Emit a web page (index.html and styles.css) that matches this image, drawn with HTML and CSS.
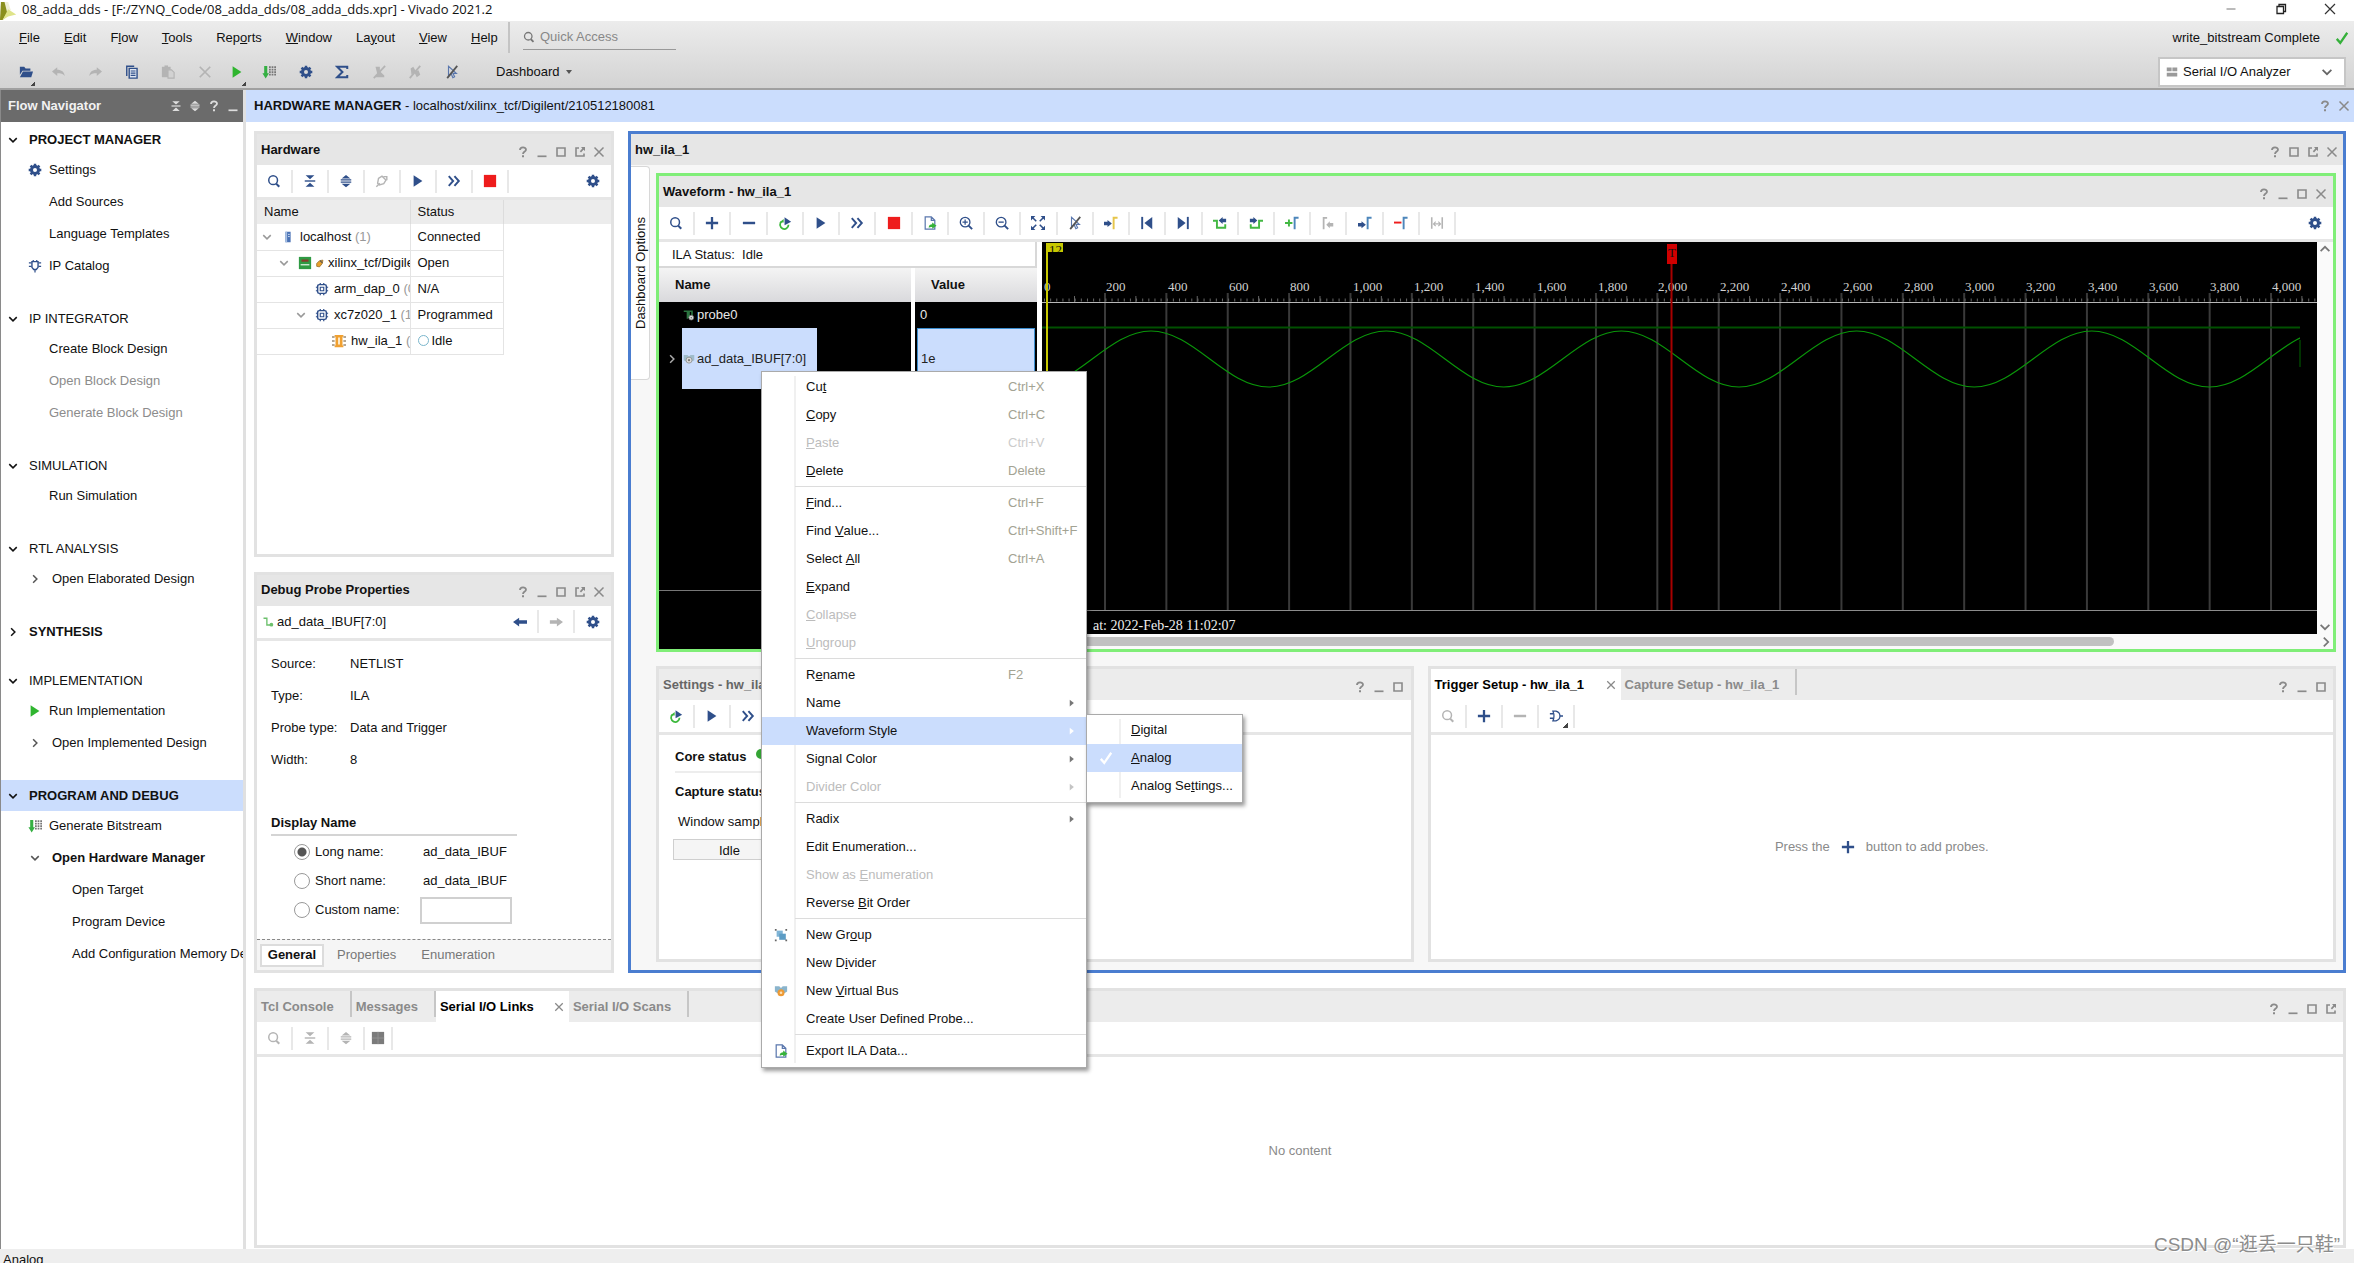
FILE: index.html
```html
<!DOCTYPE html>
<html lang="en">
<head>
<meta charset="utf-8">
<title>08_adda_dds - Vivado 2021.2</title>
<link rel="stylesheet" href="styles.css">
</head>
<body>
<svg class="sprite" aria-hidden="true">
  <symbol id="i-search" viewBox="0 0 16 16"><circle cx="7" cy="7" r="5" fill="none" stroke="currentColor" stroke-width="1.7"/><path d="M10.5 11l3.5 3.5" stroke="currentColor" stroke-width="2.4"/></symbol>
  <symbol id="i-collapse" viewBox="0 0 16 16"><path d="M3 1.500h10L8 6zM3 14.500h10L8 10z" fill="currentColor"/><path d="M2 8h12" stroke="currentColor" stroke-width="1.600"/></symbol>
  <symbol id="i-expand" viewBox="0 0 16 16"><path d="M3 5h10L8 1zM3 11h10l-5 4z" fill="currentColor"/><path d="M2 6.800h12M2 9.300h12" stroke="currentColor" stroke-width="1.400"/></symbol>
  <symbol id="i-gear" viewBox="0 0 16 16"><circle cx="8" cy="8" r="4" fill="none" stroke="currentColor" stroke-width="3.400"/><path d="M8 .8v3M8 12.200v3M.8 8h3M12.200 8h3M2.900 2.900l2 2M11.100 11.100l2 2M2.900 13.100l2-2M11.100 4.900l2-2" stroke="currentColor" stroke-width="2.800"/></symbol>
  <symbol id="i-play" viewBox="0 0 16 16"><path d="M3 1.500L13 8 3 14.500z" fill="currentColor"/></symbol>
  <symbol id="i-ffwd" viewBox="0 0 16 16"><path d="M2 2.500L7 8l-5 5.500M8.500 2.500l5 5.500-5 5.500" fill="none" stroke="currentColor" stroke-width="2.200"/></symbol>
  <symbol id="i-stop" viewBox="0 0 16 16"><path d="M1 1h14v14H1z" fill="#ee1c1c"/></symbol>
  <symbol id="i-plus" viewBox="0 0 16 16"><path d="M8 1v14M1 8h14" stroke="currentColor" stroke-width="2.600"/></symbol>
  <symbol id="i-minus" viewBox="0 0 16 16"><path d="M1 8h14" stroke="currentColor" stroke-width="2.800"/></symbol>
  <symbol id="i-rerun" viewBox="0 0 16 16"><path d="M4 6.500a4.800 4.800 0 1 0 8 3.500" fill="none" stroke="#3cb83c" stroke-width="2"/><path d="M1.500 7.500h5V3.500z" fill="#3cb83c"/><path d="M7.500 1.500L15 6.500l-7.500 4z" fill="currentColor"/></symbol>
  <symbol id="i-export" viewBox="0 0 16 16"><path d="M9.500 1H2.500v14h11V5zM9.500 1v4h4" fill="#fff" stroke="#5a77ad" stroke-width="1.400"/><path d="M6.500 13.500c0-3 2-4 4-4V7.500l5 3.500-5 3.500v-2c-2 0-3 .2-4 1z" fill="#37b23a"/></symbol>
  <symbol id="i-zoomin" viewBox="0 0 16 16"><circle cx="7" cy="7" r="5.500" fill="none" stroke="currentColor" stroke-width="1.500"/><path d="M11 11l4 4" stroke="currentColor" stroke-width="2.200"/><path d="M4 7h6M7 4v6" stroke="currentColor" stroke-width="1.400"/></symbol>
  <symbol id="i-zoomout" viewBox="0 0 16 16"><circle cx="7" cy="7" r="5.500" fill="none" stroke="currentColor" stroke-width="1.500"/><path d="M11 11l4 4" stroke="currentColor" stroke-width="2.200"/><path d="M4 7h6" stroke="currentColor" stroke-width="1.500"/></symbol>
  <symbol id="i-fit" viewBox="0 0 16 16"><path d="M0 0h5L0 5zM16 0v5l-5-5zM0 16v-5l5 5zM16 16h-5l5-5z" fill="currentColor"/><path d="M2 2l4 4M14 2l-4 4M2 14l4-4M14 14l-4-4" stroke="currentColor" stroke-width="1.800"/></symbol>
  <symbol id="i-cursoroff" viewBox="0 0 16 16"><path d="M4 1.500v11l3-2.500 2 4.500 2-1-2-4h4z" fill="none" stroke="#5a77ad" stroke-width="1.300"/><path d="M14 1L2.500 15" stroke="#555" stroke-width="2"/></symbol>
  <symbol id="i-gocursor" viewBox="0 0 16 16"><path d="M0 6.500h4v-2L9 8.500l-5 4v-2H0z" fill="currentColor"/><path d="M15.500 2H11v13" fill="none" stroke="#e6c54a" stroke-width="2.200"/></symbol>
  <symbol id="i-first" viewBox="0 0 16 16"><path d="M2.500 1v14" stroke="currentColor" stroke-width="2.200"/><path d="M14 1v14L5 8z" fill="currentColor"/></symbol>
  <symbol id="i-last" viewBox="0 0 16 16"><path d="M13.500 1v14" stroke="currentColor" stroke-width="2.200"/><path d="M2 1v14l9-7z" fill="currentColor"/></symbol>
  <symbol id="i-prevedge" viewBox="0 0 16 16"><path d="M0 5.500h4.500v8H15M14 13V9.500" fill="none" stroke="#43b843" stroke-width="2.200"/><path d="M6.500 5L11 1v2h4v4h-4v2z" fill="currentColor"/></symbol>
  <symbol id="i-nextedge" viewBox="0 0 16 16"><path d="M1 13.500h10.500v-8H16M2 13V9.500" fill="none" stroke="#43b843" stroke-width="2.200"/><path d="M9.500 5L5 1v2H1v4h4v2z" fill="currentColor"/></symbol>
  <symbol id="i-addmark" viewBox="0 0 16 16"><path d="M4.500 4v8M0 8h8.500" stroke="#43b843" stroke-width="2.200"/><path d="M15.500 2H11v13" fill="none" stroke="#4d86bb" stroke-width="2.200"/></symbol>
  <symbol id="i-prevmark" viewBox="0 0 16 16"><path d="M7 2H3v13" fill="none" stroke="currentColor" stroke-width="2"/><path d="M6 10l4-4v2h4v4h-4v2z" fill="currentColor"/></symbol>
  <symbol id="i-nextmark" viewBox="0 0 16 16"><path d="M0 8h4V6l5 4-5 4v-2H0z" fill="currentColor"/><path d="M15.500 2H11v13" fill="none" stroke="#4d86bb" stroke-width="2.200"/></symbol>
  <symbol id="i-delmark" viewBox="0 0 16 16"><path d="M0 7.500h8.500" stroke="#ee1c1c" stroke-width="2.200"/><path d="M15.500 2H11v13" fill="none" stroke="#4d86bb" stroke-width="2.200"/></symbol>
  <symbol id="i-swap" viewBox="0 0 16 16"><path d="M2 1.500v13M14 1.500v13" stroke="currentColor" stroke-width="1.800"/><path d="M4 9h8M6.500 6.500L4 9l2.500 2.500M9.500 6.500L12 9l-2.500 2.500" fill="none" stroke="currentColor" stroke-width="1.300"/></symbol>
  <symbol id="i-plug" viewBox="0 0 16 16"><path d="M4 5l4-2.500 4.500 4.500-2.500 4-5 1.500-2-2z" fill="none" stroke="currentColor" stroke-width="1.600"/><path d="M9.500 3h4v4M1.500 14.500l4-4" fill="none" stroke="currentColor" stroke-width="1.600"/></symbol>
  <symbol id="i-open" viewBox="0 0 16 16"><path d="M1 2h5l1.500 2H13v2.500H4L1 11z" fill="currentColor"/><path d="M4.500 7.500H16L14 14H1z" fill="currentColor"/></symbol>
  <symbol id="i-undo" viewBox="0 0 16 16"><path d="M6 2.500v3c5 0 8 2.500 8.500 7-2-2.500-4.500-3-8.500-3v3L0 7.500z" fill="currentColor"/></symbol>
  <symbol id="i-redo" viewBox="0 0 16 16"><path d="M10 2.500v3c-5 0-8 2.500-8.500 7 2-2.500 4.500-3 8.500-3v3l6-5z" fill="currentColor"/></symbol>
  <symbol id="i-copy" viewBox="0 0 16 16"><path d="M2 12.500V1.500h8.500" fill="none" stroke="currentColor" stroke-width="1.600"/><path d="M4.800 3.800h9v11.200h-9z" fill="#dfe6f2" stroke="currentColor" stroke-width="1.600"/><path d="M6.500 6.800h5.500M6.500 9.300h5.500M6.500 11.800h5.500" stroke="currentColor" stroke-width="1.300"/></symbol>
  <symbol id="i-paste" viewBox="0 0 16 16"><path d="M1 2h10v12H1z" fill="currentColor"/><path d="M4 .5h4v2.500H4z" fill="currentColor"/><path d="M8 5.500h4l3 3V15H8z" fill="#d2d2d2" stroke="currentColor" stroke-width="1.300"/></symbol>
  <symbol id="i-cross" viewBox="0 0 16 16"><path d="M2 2l12 12M14 2L2 14" stroke="currentColor" stroke-width="2"/></symbol>
  <symbol id="i-bits" viewBox="0 0 16 16"><path d="M2.500 1h3.500v8.500h2L4.200 15.500.5 9.500h2z" fill="#35b043"/><path d="M9 1.500v11M12 1.500v11M15 1.500v11" stroke="#777" stroke-width="2" stroke-dasharray="2 .8"/></symbol>
  <symbol id="i-sigma" viewBox="0 0 16 16"><path d="M14 4.500V2H2.500L8.500 8l-6 6H14v-2.500" fill="none" stroke="currentColor" stroke-width="2.300"/></symbol>
  <symbol id="i-slash" viewBox="0 0 16 16"><path d="M3 4l3-2 3 5-5 4zM7 8l5-2 2 5-4 3z" fill="currentColor"/><path d="M14 1L2 15" stroke="currentColor" stroke-width="2"/></symbol>
  <symbol id="i-unmark" viewBox="0 0 16 16"><path d="M4 2h5v5l5 5v2H3l3-4z" fill="currentColor"/><path d="M15 1L2 15" stroke="currentColor" stroke-width="2"/></symbol>
  <symbol id="i-arrowl" viewBox="0 0 16 16"><path d="M0 8l7-5v3h9v4H7v3z" fill="currentColor"/></symbol>
  <symbol id="i-arrowr" viewBox="0 0 16 16"><path d="M16 8L9 3v3H1v4h8v3z" fill="currentColor"/></symbol>
  <symbol id="i-gate" viewBox="0 0 16 16"><path d="M4.500 2.500H8c3.500 1 4.500 3.500 4.500 5.500S11.500 12.500 8 13.500H4.500c1.500-3.500 1.500-7.500 0-11z" fill="none" stroke="currentColor" stroke-width="1.400"/><path d="M1 5.500h4M1 10.500h4M12.500 8H16" stroke="currentColor" stroke-width="1.600"/></symbol>
  <symbol id="i-square" viewBox="0 0 16 16"><path d="M1 1h14v14H1z" fill="#7b7b7b"/><path d="M8 1v14M1 8h14" stroke="#949494"/></symbol>
  <symbol id="i-down" viewBox="0 0 16 16"><path d="M3 5.500l5 5 5-5" fill="none" stroke="currentColor" stroke-width="2"/></symbol>
  <symbol id="i-right" viewBox="0 0 16 16"><path d="M5.500 3l5 5-5 5" fill="none" stroke="currentColor" stroke-width="2"/></symbol>
  <symbol id="i-up" viewBox="0 0 16 16"><path d="M3 10.500l5-5 5 5" fill="none" stroke="currentColor" stroke-width="2"/></symbol>
  <symbol id="i-help" viewBox="0 0 12 12"><path d="M3 4c0-3.500 6-3.500 6-.3C9 5.500 6 5.500 6 8" fill="none" stroke="currentColor" stroke-width="1.800"/><path d="M6 9.300v2" stroke="currentColor" stroke-width="2"/></symbol>
  <symbol id="i-min" viewBox="0 0 12 12"><path d="M1.500 10.300h9" stroke="currentColor" stroke-width="1.700"/></symbol>
  <symbol id="i-max" viewBox="0 0 12 12"><path d="M2 2h8v8H2z" fill="none" stroke="currentColor" stroke-width="1.600"/></symbol>
  <symbol id="i-float" viewBox="0 0 12 12"><path d="M5 2H2v8h8V7.500" fill="none" stroke="currentColor" stroke-width="1.600"/><path d="M7 1h4v4L9.500 3.800 7 6.500 5.800 5.200 8.300 2.500z" fill="currentColor"/></symbol>
  <symbol id="i-close" viewBox="0 0 12 12"><path d="M1.500 1.500l9 9M10.500 1.500l-9 9" stroke="currentColor" stroke-width="1.500"/></symbol>
  <symbol id="i-chip" viewBox="0 0 16 16"><rect x="3" y="3" width="10" height="10" rx="2" fill="none" stroke="currentColor" stroke-width="1.700"/><path d="M6 6h4v4H6z" fill="none" stroke="currentColor" stroke-width="1.300"/><path d="M6 1v2M10 1v2M6 13v2M10 13v2M1 6h2M1 10h2M13 6h2M13 10h2" stroke="currentColor" stroke-width="1.400"/></symbol>
  <symbol id="i-ip" viewBox="0 0 16 16"><path d="M4.500 3h7v6.500l-2 2.500h-3l-2-2.500z" fill="none" stroke="currentColor" stroke-width="1.600"/><path d="M1 4.500h3M1 8.500h3M12 4.500h3M12 8.500h3M8 12v3.500M6 1v2M10 1v2" stroke="currentColor" stroke-width="1.400"/></symbol>
  <symbol id="i-host" viewBox="0 0 16 16"><path d="M5 2h6v12H5z" fill="#4a72b5"/><path d="M5 2h2v12H5z" fill="#a9c0e2"/><path d="M8 5h2M8 7.500h2" stroke="#dce7f7"/></symbol>
  <symbol id="i-board" viewBox="0 0 16 16"><path d="M1 1h14v14H1z" fill="#2f9a43"/><path d="M4 4h8v2.500H4z" fill="#8a3a2c"/><path d="M3 10h10" stroke="#d8efdb" stroke-width="1.500"/></symbol>
  <symbol id="i-conn" viewBox="0 0 16 16"><path d="M3 8l5-5 6-1-1 6-5 6-5-1z" fill="#e9a02b" stroke="#9a7435" stroke-width="1.500"/><path d="M9 3l4 4" stroke="#555" stroke-width="2"/></symbol>
  <symbol id="i-ila" viewBox="0 0 16 16"><path d="M3 1h10v2H3zM3 13h10v2H3zM4 3h8v10H4z" fill="#f0a030"/><path d="M0 3.500h3M13 3.500h3M0 8h3M13 8h3M0 12.500h3M13 12.500h3" stroke="#9b8b72" stroke-width="1.600"/><path d="M7 4h2v8H7z" fill="#fff3dc"/></symbol>
  <symbol id="i-net" viewBox="0 0 16 16"><path d="M2 3h4.500v9H14" fill="none" stroke="#6cc06c" stroke-width="1.800"/><circle cx="12.500" cy="11.500" r="2.500" fill="#6cc06c"/></symbol>
  <symbol id="i-probe" viewBox="0 0 16 16"><path d="M1 3h5v10M8 12V3h4v6" fill="none" stroke="#2b7440" stroke-width="2.200"/><circle cx="11" cy="11.500" r="3.200" fill="#ddd" stroke="#777"/><circle cx="11" cy="11.500" r="1" fill="#666"/></symbol>
  <symbol id="i-bus" viewBox="0 0 16 16"><path d="M1 2.500h5l2 2 2-2h5v7l-4 2.500H5L1 9.500z" fill="#9fbccb"/><circle cx="8" cy="9.500" r="4" fill="#ddd" stroke="#888"/><circle cx="8" cy="9.500" r="1.500" fill="#777"/></symbol>
  <symbol id="i-vbus" viewBox="0 0 16 16"><path d="M1 2.500h5l2 2 2-2h5v6l-4 2.500H5L1 8.500z" fill="#8ab4cc"/><circle cx="8" cy="10" r="4" fill="#ee9a34"/><circle cx="8" cy="10" r="1.500" fill="#fbe0b8"/></symbol>
  <symbol id="i-group" viewBox="0 0 16 16"><path d="M3 3h7v7H3z" fill="#7fb4d6"/><path d="M6 6.500h7.500v7H6z" fill="#5c9cc4"/><path d="M1 1h2v2H1zM13 1h2v2h-2zM1 13h2v2H1zM13 13h2v2h-2z" fill="#666"/></symbol>
  <symbol id="i-layout" viewBox="0 0 16 16"><path d="M1 2h6.500v5H1zM8.500 2H15v5H8.500zM1 9h14v5H1z" fill="#9a9a9a"/></symbol>
  <symbol id="i-check" viewBox="0 0 16 16"><path d="M2 9l4 4.500L14 2" fill="none" stroke="currentColor" stroke-width="2.600"/></symbol>
  <symbol id="i-sub" viewBox="0 0 16 16"><path d="M5 3.500l5.500 4.500L5 12.500z" fill="currentColor"/></symbol>
  <symbol id="i-logo" viewBox="0 0 20 20"><path d="M1 0h5l3 10-6 10H0z" fill="#8a8f1d"/><path d="M5 0h4l3 9-4 3z" fill="#f0f0d8"/><path d="M9 8l9 6-9 2-6 4z" fill="#dfe48a"/></symbol>
</svg>

<header class="titlebar">
  <svg class="logo"><use href="#i-logo"/></svg>
  <h1>08_adda_dds - [F:/ZYNQ_Code/08_adda_dds/08_adda_dds.xpr] - Vivado 2021.2</h1>
  <div class="win-ctl">
    <button aria-label="Minimize"><svg viewBox="0 0 12 12"><path d="M1.500 6h9" stroke="#777"/></svg></button>
    <button aria-label="Restore"><svg viewBox="0 0 12 12"><path d="M2 3.500h6.500v7H2zM4 3.500v-2h6.500v7h-2" fill="none" stroke="#222" stroke-width="1.300"/></svg></button>
    <button aria-label="Close"><svg viewBox="0 0 12 12"><path d="M1 1l10 10M11 1L1 11" stroke="#333" stroke-width="1.200"/></svg></button>
  </div>
</header>

<div class="ribbon">
  <div class="menurow">
    <nav class="menubar">
      <button><u>F</u>ile</button><button><u>E</u>dit</button><button>F<u>l</u>ow</button><button><u>T</u>ools</button><button>Rep<u>o</u>rts</button><button><u>W</u>indow</button><button>La<u>y</u>out</button><button><u>V</u>iew</button><button><u>H</u>elp</button>
    </nav>
    <label class="quick"><svg class="ic-s"><use href="#i-search"/></svg><input type="text" placeholder="Quick Access" aria-label="Quick Access"></label>
    <span class="build">write_bitstream Complete<svg class="ic ok"><use href="#i-check"/></svg></span>
  </div>
  <div class="toolrow">
    <div class="maintools">
      <button class="nar drop" aria-label="Open"><svg class="ic"><use href="#i-open"/></svg></button>
      <button class="off" aria-label="Undo"><svg class="ic"><use href="#i-undo"/></svg></button>
      <button class="off" aria-label="Redo"><svg class="ic"><use href="#i-redo"/></svg></button>
      <button aria-label="Copy"><svg class="ic"><use href="#i-copy"/></svg></button>
      <button class="off" aria-label="Paste"><svg class="ic"><use href="#i-paste"/></svg></button>
      <button class="off" aria-label="Delete"><svg class="ic"><use href="#i-cross"/></svg></button>
      <button class="nar drop green" aria-label="Run"><svg class="ic"><use href="#i-play"/></svg></button>
      <button aria-label="Generate Bitstream"><svg class="ic"><use href="#i-bits"/></svg></button>
      <button aria-label="Settings"><svg class="ic"><use href="#i-gear"/></svg></button>
      <button aria-label="Report"><svg class="ic"><use href="#i-sigma"/></svg></button>
      <button class="off" aria-label="Unmark"><svg class="ic"><use href="#i-unmark"/></svg></button>
      <button class="off" aria-label="Unhighlight"><svg class="ic"><use href="#i-slash"/></svg></button>
      <button aria-label="Unselect"><svg class="ic"><use href="#i-cursoroff"/></svg></button>
    </div>
    <button class="dash">Dashboard<i class="caret"></i></button>
    <label class="layout-sel"><svg class="ic-s"><use href="#i-layout"/></svg><select aria-label="Layout"><option>Serial I/O Analyzer</option></select><svg class="ic"><use href="#i-down"/></svg></label>
  </div>
</div>

<div class="workspace">
  <aside class="flow">
    <div class="flow-head"><h2>Flow Navigator</h2>
      <div class="ctl"><button aria-label="Collapse all"><svg><use href="#i-collapse"/></svg></button><button aria-label="Expand all"><svg><use href="#i-expand"/></svg></button><button aria-label="Help"><svg><use href="#i-help"/></svg></button><button aria-label="Minimize"><svg><use href="#i-min"/></svg></button></div>
    </div>
    <nav class="tree">
      <section><h3 class="b"><svg class="ic-s"><use href="#i-down"/></svg>PROJECT MANAGER</h3>
        <ul><li><a href="#"><svg class="ic navy"><use href="#i-gear"/></svg>Settings</a></li><li><a href="#">Add Sources</a></li><li><a href="#">Language Templates</a></li><li><a href="#"><svg class="ic navy"><use href="#i-ip"/></svg>IP Catalog</a></li></ul></section>
      <section><h3><svg class="ic-s"><use href="#i-down"/></svg>IP INTEGRATOR</h3>
        <ul><li><a href="#">Create Block Design</a></li><li><a href="#" class="dim">Open Block Design</a></li><li><a href="#" class="dim">Generate Block Design</a></li></ul></section>
      <section><h3><svg class="ic-s"><use href="#i-down"/></svg>SIMULATION</h3>
        <ul><li><a href="#">Run Simulation</a></li></ul></section>
      <section><h3><svg class="ic-s"><use href="#i-down"/></svg>RTL ANALYSIS</h3>
        <ul><li><a href="#" class="sub"><svg class="ic-s"><use href="#i-right"/></svg>Open Elaborated Design</a></li></ul></section>
      <section class="shut"><h3 class="b"><svg class="ic-s"><use href="#i-right"/></svg>SYNTHESIS</h3></section>
      <section><h3><svg class="ic-s"><use href="#i-down"/></svg>IMPLEMENTATION</h3>
        <ul><li><a href="#"><svg class="ic green"><use href="#i-play"/></svg>Run Implementation</a></li><li><a href="#" class="sub"><svg class="ic-s"><use href="#i-right"/></svg>Open Implemented Design</a></li></ul></section>
      <section><h3 class="b sel"><svg class="ic-s"><use href="#i-down"/></svg>PROGRAM AND DEBUG</h3>
        <ul><li><a href="#"><svg class="ic"><use href="#i-bits"/></svg>Generate Bitstream</a></li><li><a href="#" class="sub b"><svg class="ic-s"><use href="#i-down"/></svg>Open Hardware Manager</a></li><li><a href="#" class="deep">Open Target</a></li><li><a href="#" class="deep">Program Device</a></li><li><a href="#" class="deep">Add Configuration Memory Device</a></li></ul></section>
    </nav>
  </aside>

  <main>
    <div class="hwbar"><p><b>HARDWARE MANAGER</b> - localhost/xilinx_tcf/Digilent/210512180081</p>
      <div class="ctl"><button aria-label="Help"><svg><use href="#i-help"/></svg></button><button aria-label="Close"><svg><use href="#i-close"/></svg></button></div>
    </div>
    <div class="body">
      <div class="upper">
        <div class="left">
          <section class="panel hardware">
            <div class="head"><h2>Hardware</h2><div class="ctl"><button aria-label="Help"><svg><use href="#i-help"/></svg></button><button aria-label="Minimize"><svg><use href="#i-min"/></svg></button><button aria-label="Maximize"><svg><use href="#i-max"/></svg></button><button aria-label="Float"><svg><use href="#i-float"/></svg></button><button aria-label="Close"><svg><use href="#i-close"/></svg></button></div></div>
            <div class="bar">
              <button aria-label="Search"><svg class="ic"><use href="#i-search"/></svg></button><button aria-label="Collapse"><svg class="ic"><use href="#i-collapse"/></svg></button><button aria-label="Expand"><svg class="ic"><use href="#i-expand"/></svg></button><button class="off" aria-label="Connect"><svg class="ic"><use href="#i-plug"/></svg></button><button aria-label="Run"><svg class="ic"><use href="#i-play"/></svg></button><button aria-label="Run immediate"><svg class="ic"><use href="#i-ffwd"/></svg></button><button aria-label="Stop"><svg class="ic"><use href="#i-stop"/></svg></button><button class="end" aria-label="Settings"><svg class="ic"><use href="#i-gear"/></svg></button>
            </div>
            <div class="hwtable"><table>
              <thead><tr><th>Name</th><th>Status</th></tr></thead>
              <tbody>
                <tr><td><div class="node"><svg class="ic-s chev"><use href="#i-down"/></svg><svg class="ic"><use href="#i-host"/></svg><span>localhost <em>(1)</em></span></div></td><td>Connected</td></tr>
                <tr><td><div class="node l1"><svg class="ic-s chev"><use href="#i-down"/></svg><svg class="ic"><use href="#i-board"/></svg><svg class="ic-xs"><use href="#i-conn"/></svg><span>xilinx_tcf/Digilent</span></div></td><td>Open</td></tr>
                <tr><td><div class="node l3"><svg class="ic navy"><use href="#i-chip"/></svg><span>arm_dap_0 <em>(0)</em></span></div></td><td>N/A</td></tr>
                <tr><td><div class="node l2"><svg class="ic-s chev"><use href="#i-down"/></svg><svg class="ic navy"><use href="#i-chip"/></svg><span>xc7z020_1 <em>(1)</em></span></div></td><td>Programmed</td></tr>
                <tr><td><div class="node l4"><svg class="ic"><use href="#i-ila"/></svg><span>hw_ila_1 <em>(ILA)</em></span></div></td><td class="idle"><i></i>Idle</td></tr>
              </tbody>
            </table></div>
          </section>

          <section class="panel props">
            <div class="head"><h2>Debug Probe Properties</h2><div class="ctl"><button aria-label="Help"><svg><use href="#i-help"/></svg></button><button aria-label="Minimize"><svg><use href="#i-min"/></svg></button><button aria-label="Maximize"><svg><use href="#i-max"/></svg></button><button aria-label="Float"><svg><use href="#i-float"/></svg></button><button aria-label="Close"><svg><use href="#i-close"/></svg></button></div></div>
            <div class="bar"><svg class="ic-s lead"><use href="#i-net"/></svg><span class="grow">ad_data_IBUF[7:0]</span><button aria-label="Back"><svg class="ic"><use href="#i-arrowl"/></svg></button><button class="off" aria-label="Forward"><svg class="ic"><use href="#i-arrowr"/></svg></button><button class="end" aria-label="Settings"><svg class="ic"><use href="#i-gear"/></svg></button></div>
            <div class="propbody">
              <dl><dt>Source:</dt><dd>NETLIST</dd><dt>Type:</dt><dd>ILA</dd><dt>Probe type:</dt><dd>Data and Trigger</dd><dt>Width:</dt><dd>8</dd></dl>
              <fieldset><legend>Display Name</legend>
                <div class="opt"><label><input type="radio" name="dn" checked>Long name:</label><span>ad_data_IBUF</span></div>
                <div class="opt"><label><input type="radio" name="dn">Short name:</label><span>ad_data_IBUF</span></div>
                <div class="opt"><label><input type="radio" name="dn">Custom name:</label><input type="text" aria-label="Custom name"></div>
              </fieldset>
            </div>
            <div class="foot"><button class="on">General</button><button>Properties</button><button>Enumeration</button></div>
          </section>
        </div>

        <section class="panel ila">
          <div class="head"><h2>hw_ila_1</h2><div class="ctl"><button aria-label="Help"><svg><use href="#i-help"/></svg></button><button aria-label="Maximize"><svg><use href="#i-max"/></svg></button><button aria-label="Float"><svg><use href="#i-float"/></svg></button><button aria-label="Close"><svg><use href="#i-close"/></svg></button></div></div>
          <div class="ila-body">
            <button class="side-tab">Dashboard Options</button>
            <div class="ila-main">
              <section class="panel wave">
                <div class="head"><h2>Waveform - hw_ila_1</h2><div class="ctl"><button aria-label="Help"><svg><use href="#i-help"/></svg></button><button aria-label="Minimize"><svg><use href="#i-min"/></svg></button><button aria-label="Maximize"><svg><use href="#i-max"/></svg></button><button aria-label="Close"><svg><use href="#i-close"/></svg></button></div></div>
                <div class="bar"><div class="wavetools">
                  <button aria-label="Find"><svg class="ic"><use href="#i-search"/></svg></button><button aria-label="Add"><svg class="ic"><use href="#i-plus"/></svg></button><button aria-label="Remove"><svg class="ic"><use href="#i-minus"/></svg></button><button aria-label="Re-trigger"><svg class="ic"><use href="#i-rerun"/></svg></button><button aria-label="Run"><svg class="ic"><use href="#i-play"/></svg></button><button aria-label="Run immediate"><svg class="ic"><use href="#i-ffwd"/></svg></button><button aria-label="Stop"><svg class="ic"><use href="#i-stop"/></svg></button><button aria-label="Export"><svg class="ic"><use href="#i-export"/></svg></button><button aria-label="Zoom in"><svg class="ic"><use href="#i-zoomin"/></svg></button><button aria-label="Zoom out"><svg class="ic"><use href="#i-zoomout"/></svg></button><button aria-label="Zoom fit"><svg class="ic"><use href="#i-fit"/></svg></button><button aria-label="Unselect"><svg class="ic"><use href="#i-cursoroff"/></svg></button><button aria-label="Go to cursor"><svg class="ic"><use href="#i-gocursor"/></svg></button><button aria-label="First"><svg class="ic"><use href="#i-first"/></svg></button><button aria-label="Last"><svg class="ic"><use href="#i-last"/></svg></button><button aria-label="Previous transition"><svg class="ic"><use href="#i-prevedge"/></svg></button><button aria-label="Next transition"><svg class="ic"><use href="#i-nextedge"/></svg></button><button aria-label="Add marker"><svg class="ic"><use href="#i-addmark"/></svg></button><button class="off" aria-label="Previous marker"><svg class="ic"><use href="#i-prevmark"/></svg></button><button aria-label="Next marker"><svg class="ic"><use href="#i-nextmark"/></svg></button><button aria-label="Delete marker"><svg class="ic"><use href="#i-delmark"/></svg></button><button class="off" aria-label="Swap"><svg class="ic"><use href="#i-swap"/></svg></button>
                  </div><button class="end" aria-label="Settings"><svg class="ic"><use href="#i-gear"/></svg></button></div>
                <div class="wavebody">
                  <div class="signals">
                    <p class="status">ILA Status:&nbsp; Idle</p>
                    <div class="cols">
                      <div class="col name"><h3>Name</h3>
                        <div class="sig"><svg class="ic-xs"><use href="#i-probe"/></svg>probe0</div>
                        <div class="sig tall"><svg class="ic-s tw"><use href="#i-right"/></svg><span class="pick"><svg class="ic-xs"><use href="#i-bus"/></svg>ad_data_IBUF[7:0]</span></div>
                        <div class="rest"></div></div>
                      <div class="col value"><h3>Value</h3>
                        <div class="sig">0</div>
                        <div class="sig tall"><span class="pick">1e</span></div>
                        <div class="rest"></div></div>
                    </div>
                  </div>
                  <div class="plot">
                    <svg class="trace" role="img" aria-label="Waveform of ad_data_IBUF">
                      <defs><clipPath id="samples"><rect x="2" width="1256" height="392"/></clipPath></defs>
                      <path d="M62 209.500H1275" stroke="#3a3a3a" stroke-width="317" stroke-dasharray="2 59.370"/>
                      <path d="M2 58H1275" stroke="#666" stroke-width="3" stroke-dasharray="1 5.137"/>
                      <path d="M32 57H1275" stroke="#666" stroke-width="6" stroke-dasharray="1 60.370"/>
                      <path d="M0 60.500H1275" stroke="#b8b8b8"/>
                      <path d="M0 368.500H1275" stroke="#8c8c8c"/>
                      <g class="ruler">
                        <text x="2" y="49">0</text><text x="64" y="49">200</text><text x="126" y="49">400</text><text x="187" y="49">600</text><text x="248" y="49">800</text><text x="311" y="49">1,000</text><text x="372" y="49">1,200</text><text x="433" y="49">1,400</text><text x="495" y="49">1,600</text><text x="556" y="49">1,800</text><text x="616" y="49">2,000</text><text x="678" y="49">2,200</text><text x="739" y="49">2,400</text><text x="801" y="49">2,600</text><text x="862" y="49">2,800</text><text x="923" y="49">3,000</text><text x="984" y="49">3,200</text><text x="1046" y="49">3,400</text><text x="1107" y="49">3,600</text><text x="1168" y="49">3,800</text><text x="1230" y="49">4,000</text>
                      </g>
                      <path d="M0 85.500H1258" stroke="#005000" stroke-width="2"/>
                      <path clip-path="url(#samples)" d="M-8.600 145c42.800 0 74.800-56 117.600-56s74.800 56 117.600 56s74.800-56 117.600-56s74.800 56 117.600 56s74.800-56 117.600-56s74.800 56 117.600 56s74.800-56 117.600-56s74.800 56 117.600 56s74.800-56 117.600-56s74.800 56 117.600 56s74.800-56 117.600-56" fill="none" stroke="#0a960a" stroke-width="1.200"/>
                      <path d="M1258 98V125" stroke="#006400"/>
                      <path d="M5 1V368" stroke="#c8c800" stroke-width="2"/>
                      <path d="M5 1h16v9H5z" fill="#c8c800"/>
                      <svg x="5" y="0" width="16" height="10"><text class="mark" x="2" y="12">12</text></svg>
                      <path d="M629.500 3V368" stroke="#a80000" stroke-width="2"/>
                      <path d="M625 2h10v20h-10z" fill="#d00000"/>
                      <text class="mark" x="626" y="15">T</text>
                      <text class="stamp" x="51" y="388">at: 2022-Feb-28 11:02:07</text>
                    </svg>
                    <div class="vscroll"><svg class="ic"><use href="#i-up"/></svg><svg class="ic"><use href="#i-down"/></svg></div>
                    <div class="hscroll"><i></i><svg class="ic"><use href="#i-right"/></svg></div>
                  </div>
                </div>
              </section>

              <div class="lower">
                <section class="panel sub settings">
                  <div class="head"><h2>Settings - hw_ila_1</h2><div class="ctl"><button aria-label="Help"><svg><use href="#i-help"/></svg></button><button aria-label="Minimize"><svg><use href="#i-min"/></svg></button><button aria-label="Maximize"><svg><use href="#i-max"/></svg></button></div></div>
                  <div class="bar"><button aria-label="Re-trigger"><svg class="ic"><use href="#i-rerun"/></svg></button><button aria-label="Run"><svg class="ic"><use href="#i-play"/></svg></button><button aria-label="Run immediate"><svg class="ic"><use href="#i-ffwd"/></svg></button></div>
                  <div class="setbody">
                    <p class="core"><b>Core status</b><i></i></p>
                    <p><b>Capture status</b></p>
                    <p class="win">Window sample</p>
                    <div class="prog">Idle</div>
                  </div>
                </section>
                <section class="panel sub trigger">
                  <div class="head tabs"><button class="tab on">Trigger Setup - hw_ila_1<svg><use href="#i-close"/></svg></button><button class="tab sep">Capture Setup - hw_ila_1</button><div class="ctl"><button aria-label="Help"><svg><use href="#i-help"/></svg></button><button aria-label="Minimize"><svg><use href="#i-min"/></svg></button><button aria-label="Maximize"><svg><use href="#i-max"/></svg></button></div></div>
                  <div class="bar"><button class="off" aria-label="Search"><svg class="ic"><use href="#i-search"/></svg></button><button aria-label="Add probe"><svg class="ic"><use href="#i-plus"/></svg></button><button class="off" aria-label="Remove probe"><svg class="ic"><use href="#i-minus"/></svg></button><button class="drop" aria-label="Trigger condition"><svg class="ic"><use href="#i-gate"/></svg></button></div>
                  <p class="empty">Press the <svg class="ic navy"><use href="#i-plus"/></svg> button to add probes.</p>
                </section>
              </div>
            </div>
          </div>
        </section>
      </div>

      <section class="panel sub console">
        <div class="head tabs"><button class="tab sep">Tcl Console</button><button class="tab sep">Messages</button><button class="tab on">Serial I/O Links<svg><use href="#i-close"/></svg></button><button class="tab sep">Serial I/O Scans</button><div class="ctl"><button aria-label="Help"><svg><use href="#i-help"/></svg></button><button aria-label="Minimize"><svg><use href="#i-min"/></svg></button><button aria-label="Maximize"><svg><use href="#i-max"/></svg></button><button aria-label="Float"><svg><use href="#i-float"/></svg></button></div></div>
        <div class="bar"><button class="off" aria-label="Search"><svg class="ic"><use href="#i-search"/></svg></button><button class="off" aria-label="Collapse"><svg class="ic"><use href="#i-collapse"/></svg></button><button class="off" aria-label="Expand"><svg class="ic"><use href="#i-expand"/></svg></button><button class="nar" aria-label="Group"><svg class="ic"><use href="#i-square"/></svg></button></div>
        <p class="empty">No content</p>
      </section>
    </div>
  </main>
</div>
<footer class="statusbar">Analog</footer>
<p class="credit">CSDN @“逛丢一只鞋”</p>

<div class="ctx ctx-main" role="menu">
  <button>Cu<u>t</u><kbd>Ctrl+X</kbd></button>
  <button><u>C</u>opy<kbd>Ctrl+C</kbd></button>
  <button disabled><u>P</u>aste<kbd>Ctrl+V</kbd></button>
  <button><u>D</u>elete<kbd>Delete</kbd></button>
  <hr>
  <button><u>F</u>ind...<kbd>Ctrl+F</kbd></button>
  <button>Find <u>V</u>alue...<kbd>Ctrl+Shift+F</kbd></button>
  <button>Select <u>A</u>ll<kbd>Ctrl+A</kbd></button>
  <button><u>E</u>xpand</button>
  <button disabled><u>C</u>ollapse</button>
  <button disabled><u>U</u>ngroup</button>
  <hr>
  <button>R<u>e</u>name<kbd>F2</kbd></button>
  <button>Name<svg class="arr"><use href="#i-sub"/></svg></button>
  <button class="hot">Waveform Style<svg class="arr"><use href="#i-sub"/></svg></button>
  <button>Signal Color<svg class="arr"><use href="#i-sub"/></svg></button>
  <button disabled>Divider Color<svg class="arr"><use href="#i-sub"/></svg></button>
  <hr>
  <button>Radix<svg class="arr"><use href="#i-sub"/></svg></button>
  <button>Edit Enumeration...</button>
  <button disabled>Show as <u>E</u>numeration</button>
  <button>Reverse <u>B</u>it Order</button>
  <hr>
  <button><svg class="lead"><use href="#i-group"/></svg>New Gr<u>o</u>up</button>
  <button>New D<u>i</u>vider</button>
  <button><svg class="lead"><use href="#i-vbus"/></svg>New <u>V</u>irtual Bus</button>
  <button>Create User Defined Probe...</button>
  <hr>
  <button><svg class="lead"><use href="#i-export"/></svg>Export ILA Data...</button>
</div>
<div class="ctx ctx-sub" role="menu">
  <button><u>D</u>igital</button>
  <button class="hot"><svg class="lead"><use href="#i-check"/></svg><u>A</u>nalog</button>
  <button>Analog Se<u>t</u>tings...</button>
</div>
</body>
</html>
```
FILE: styles.css
```css
* { box-sizing: border-box; }
body {
  margin: 0;
  position: relative;
  display: flex;
  flex-direction: column;
  height: 100vh;
  overflow: hidden;
  font: 13px/16px "Liberation Sans", Arial, sans-serif;
  color: #111;
  background: #fff;
}
h1, h2, h3, p, ul, dl, dd, table, fieldset { margin: 0; padding: 0; }
ul { list-style: none; }
button {
  font: inherit;
  color: inherit;
  background: none;
  border: 0;
  padding: 0;
  margin: 0;
  text-align: left;
}
a { color: inherit; text-decoration: none; }
svg { flex: none; }
u { text-underline-offset: 1px; }
.sprite { position: absolute; width: 0; height: 0; }
.ic { width: 14px; height: 14px; }
.ic-s { width: 12px; height: 12px; }
.ic-xs { width: 12px; height: 12px; }
.navy { color: #2f4f8a; }
.green { color: #2fb52f; }
.b { font-weight: bold; }

/* window title */
.titlebar { display: flex; align-items: center; height: 21px; padding-right: 8px; }
.logo { width: 18px; height: 18px; margin-right: 4px; }
.titlebar h1 { flex: 1; font: 13px/18px "Open Sans", "Noto Sans", sans-serif; padding-bottom: 3px; }
.win-ctl { display: flex; }
.win-ctl button { width: 50px; height: 18px; display: grid; place-items: center; padding-bottom: 4px; }
.win-ctl button:last-child { width: 32px; margin-left: 8px; }
.win-ctl svg { width: 12px; height: 12px; }

/* menu and main tools */
.ribbon {
  height: 69px;
  background: linear-gradient(#ececec, #d3d3d3);
  border-bottom: 2px solid #a0a0a0;
}
.menurow { display: flex; align-items: center; height: 33px; padding: 0 5px 0 19px; }
.menubar { display: flex; gap: 24px; width: 491px; height: 31px; align-items: center; border-right: 2px solid #c4c4c4; }
.quick { display: flex; align-items: center; gap: 5px; width: 153px; height: 24px; margin-left: 13px; border-bottom: 1px solid #999; color: #777; }
.quick input { width: 120px; border: 0; background: none; padding: 0; font: inherit; }
.quick input::placeholder { color: #888; }
.build { margin-left: auto; display: flex; align-items: center; gap: 15px; }
.ok { color: #35b03a; }
.toolrow { display: flex; align-items: center; height: 34px; padding: 2px 8px 0 12px; }
.maintools { display: flex; width: 458px; color: #2f4f8a; }
.maintools button { flex: 36 1 36px; height: 28px; display: grid; place-items: center; }
.maintools .nar { flex: 28 1 28px; }
.off, .maintools .off { color: #b4b4b4; }
.maintools .green { color: #2fb52f; }
.drop {
  background: linear-gradient(135deg, transparent 50%, #444 50%) right 5px bottom 0 / 5px 5px no-repeat;
}
.dash { margin-left: 26px; display: flex; align-items: center; gap: 6px; }
.caret { border: 3px solid transparent; border-top: 4px solid #555; border-bottom: 0; }
.layout-sel { margin-left: auto; display: flex; align-items: center; width: 188px; height: 30px; padding: 0 10px 0 6px; border: 2px solid #c6c6c6; background: #fff; color: #666; }
.layout-sel select { flex: 1; appearance: none; border: 0; background: none; font: inherit; color: #111; padding: 0 0 0 5px; }

/* flow navigator */
.workspace { flex: 1; display: flex; min-height: 0; }
.flow { width: 246px; flex: none; overflow: hidden; border-right: 3px solid #e0e0e0; border-left: 1px solid #8a8a8a; }
.flow-head { display: flex; align-items: center; height: 32px; padding: 0 1px 0 7px; background: #6b6b6b; color: #f2f2f2; }
h2 { font-size: 13px; line-height: 16px; flex: 1; }
.ctl { display: flex; color: #8a8a8a; margin-left: auto; }
.flow-head .ctl { color: #ddd; }
.ctl button { width: 19px; height: 16px; display: grid; place-items: center; }
.ctl svg { width: 12px; height: 12px; }
.tree { padding-top: 2px; }
.tree section { padding-bottom: 20px; }
.tree .shut { padding-bottom: 18px; }
.tree h3 { display: flex; align-items: center; gap: 10px; height: 31px; padding-left: 6px; font-size: 13px; font-weight: normal; white-space: nowrap; }
.tree h3.b { font-weight: bold; }
.tree .sel { background: #cbddfd; }
.tree a { display: flex; align-items: center; height: 32px; padding: 0 0 2px 48px; white-space: nowrap; }
.tree a .ic { margin: 0 7px 0 -21px; }
.tree .sub { padding-left: 51px; }
.tree .sub .ic-s { margin: 0 11px 0 -23px; color: #555; }
.tree .deep { padding-left: 71px; }
.dim { color: #8c8c8c; }

/* main area */
main { flex: 1; min-width: 0; display: flex; flex-direction: column; }
.hwbar { display: flex; align-items: center; height: 32px; padding: 0 1px 0 8px; background: #cbddfd; }
.body { flex: 1; min-height: 0; display: flex; flex-direction: column; gap: 15px; padding: 9px 8px 1px; }
.upper { flex: 842 1 0; min-height: 0; display: flex; gap: 14px; }
.left { width: 360px; flex: none; display: flex; flex-direction: column; gap: 15px; }
.console { flex: 254 1 0; min-height: 0; }
.hardware { flex: 426 1 0; min-height: 0; }
.props { flex: 401 1 0; min-height: 0; }

.panel { display: flex; flex-direction: column; min-width: 0; border: 3px solid #e2e2e2; background: #fff; }
.head { display: flex; align-items: center; flex: none; height: 31px; padding: 0 3px 0 4px; background: #e6e6e6; }
.head .ctl { padding-top: 4px; }
.bar { display: flex; align-items: center; flex: none; height: 35px; border-bottom: 3px solid #e6e6e6; color: #2f4f8a; }
.bar button { width: 36px; height: 23px; display: grid; place-items: center; border-right: 2px solid #e8e8e8; }
.bar .end { margin-left: auto; border: 0; }
.bar .nar { width: 28px; }
.bar .off { color: #b4b4b4; }
.bar .lead { margin: 0 3px 0 5px; }
.bar .grow { flex: 1; color: #111; }
.bar .grow ~ .end { margin: 0; }

/* hardware tree */
.hwtable { background: linear-gradient(#ececec 24px, transparent 24px); }
table { table-layout: fixed; width: 246px; border-collapse: collapse; }
th { width: 153px; height: 24px; padding: 0 7px; text-align: left; font-weight: normal; border-right: 1px solid #dcdcdc; }
th + th { width: 93px; }
td { height: 26px; padding: 0 0 0 7px; border-right: 1px solid #e4e4e4; border-bottom: 1px solid #e4e4e4; overflow: hidden; white-space: nowrap; }
td:first-child { padding-left: 4px; }
.node { display: flex; align-items: center; gap: 5px; overflow: hidden; }
.node .chev { color: #999; margin-right: 3px; }
.node .ic-xs { width: 9px; height: 9px; margin: 0 -1px 0 -2px; }
.node em { font-style: normal; color: #999; }
.l1 { padding-left: 17px; }
.l2 { padding-left: 34px; }
.l3 { padding-left: 54px; }
.l4 { padding-left: 71px; }
.idle i { display: inline-block; width: 11px; height: 11px; margin: 0 3px -1px 0; border: 1px solid #7ab6cc; border-radius: 50%; }

/* probe properties */
.propbody { flex: 1; min-height: 0; padding: 7px 14px 0; }
dl { display: grid; grid-template-columns: 79px 1fr; grid-auto-rows: 32px; align-items: center; }
fieldset { border: 0; margin-top: 39px; }
legend { width: 246px; padding: 0 0 3px; font-weight: bold; border-bottom: 2px solid #d4d4d4; }
.opt { display: flex; align-items: center; height: 29px; padding-left: 23px; }
.opt:first-of-type { margin-top: 2px; }
.opt label { display: flex; align-items: center; gap: 5px; width: 129px; }
.opt input[type="text"] { width: 92px; height: 27px; margin-left: -3px; border: 2px solid #d0d0d0; background: #fff; }
.opt input[type="radio"] { appearance: none; width: 16px; height: 16px; margin: 0; border: 1px solid #999; border-radius: 50%; }
.opt input:checked { background: radial-gradient(#555 4px, transparent 5px); }
.foot { display: flex; align-items: center; gap: 13px; height: 31px; padding: 0 3px; background: #f5f5f5; border-top: 1px dashed #888; color: #777; }
.foot button { height: 23px; }
.foot .on { width: 64px; text-align: center; border: 2px solid #dcdcdc; background: #fff; font-weight: bold; color: #111; }
.foot button:last-child { margin-left: 12px; }

/* ILA dashboard */
.ila { flex: 1; border-color: #4a7dd0; }
.ila > .head { padding-right: 2px; }
.ila-body { flex: 1; min-height: 0; display: flex; gap: 6px; padding: 0 7px 8px 0; background: #f7f7f7; }
.side-tab { width: 19px; height: 214px; margin-top: 1px; border: 1px solid #d8d8d8; border-right: 0; border-radius: 4px 0 0 4px; background: #fff; writing-mode: vertical-rl; transform: rotate(180deg); text-align: center; line-height: 20px; }
.ila-main { flex: 1; min-width: 0; display: flex; flex-direction: column; gap: 14px; padding-top: 8px; }
.wave { flex: 473 1 0; min-height: 0; border-color: #80ee78; }
.lower { flex: 296 1 0; min-height: 0; display: flex; gap: 14px; }
.wavetools { display: flex; width: 797px; }
.wavetools button { flex: 1 1 36px; }
.wavebody { flex: 1; min-height: 0; display: flex; gap: 5px; }
.signals { width: 378px; flex: none; display: flex; flex-direction: column; }
.status { height: 26px; padding: 5px 13px 3px; border-bottom: 2px solid #d8d8d8; border-right: 2px solid #d8d8d8; }
.cols { flex: 1; display: flex; gap: 4px; }
.col { display: flex; flex-direction: column; background: #000; color: #e8e8e8; }
.name { width: 252px; }
.value { width: 122px; }
.col h3 { height: 34px; padding: 9px 16px; font-size: 13px; line-height: 16px; color: #111; background: linear-gradient(#f4f4f4, #d9d9dc); }
.sig { display: flex; align-items: center; height: 26px; padding-left: 5px; }
.name .sig { padding-left: 24px; gap: 2px; }
.name .tall { padding-left: 7px; gap: 4px; }
.tall { height: 61px; }
.tw { color: #aaa; }
.pick { display: flex; align-items: center; gap: 2px; height: 61px; background: #cbddfd; color: #222; }
.name .pick { width: 135px; padding-left: 1px; }
.value .tall { padding: 0 2px; }
.value .pick { flex: 1; padding-left: 3px; border: 1px solid #3c8fd0; }
.rest { flex: 1; margin-bottom: 58px; border-bottom: 1px solid #777; }
.plot { flex: 1; min-width: 0; display: grid; grid-template: 1fr 15px / 1fr 16px; }
.trace { width: 100%; height: 100%; background: #000; overflow: hidden; }
.ruler { font: 13px "Liberation Serif", serif; fill: #d0d0d0; }
.mark { font: 13px "Liberation Serif", serif; fill: #111; }
.stamp { font: 14px "Liberation Serif", serif; fill: #eee; }
.vscroll { display: flex; flex-direction: column; justify-content: space-between; align-items: center; background: #fafafa; color: #777; }
.hscroll { grid-column: 1 / 3; display: flex; align-items: center; justify-content: space-between; background: #fafafa; color: #777; }
.hscroll i { width: 83%; height: 9px; border-radius: 5px; background: #c1c1c1; }

/* secondary panels */
.sub > .head { background: #ececec; color: #666; }
.settings { flex: 757 1 0; }
.trigger { flex: 909 1 0; }
.setbody { padding: 14px; }
.setbody p { height: 30px; margin: 0 2px; }
.core { display: flex; gap: 9px; }
.setbody .core { width: 200px; height: 24px; margin-bottom: 11px; border-bottom: 2px solid #ededed; }
.core i { width: 10px; height: 10px; border-radius: 50%; background: #35a535; }
.setbody .win { height: 25px; padding-left: 3px; }
.prog { width: 160px; height: 21px; padding: 3px 45px; border: 1px solid #cfcfcf; background: #f5f5f5; line-height: 16px; }
.sub > .tabs { padding-left: 0; }
.tab { display: flex; align-items: center; height: 31px; padding-left: 4px; font-weight: bold; color: #8a8a8a; }
.tab svg { width: 10px; height: 10px; margin: 0 5px 0 auto; color: #888; }
.tab.on { width: 190px; background: #fff; color: #000; }
.console .tab.on { width: 133px; }
.tab.sep { padding-right: 18px; background: linear-gradient(#c6c6c6, #c6c6c6) right 0 top 0 / 2px 26px no-repeat; }
.empty { flex: 1; display: flex; align-items: center; justify-content: center; gap: 11px; color: #8a8a8a; }

.statusbar { flex: none; height: 14px; padding: 3px 3px 0; overflow: hidden; background: #eee; }
.credit { position: absolute; right: 14px; bottom: 5px; font: 19px/26px "Liberation Sans", "Noto Sans CJK SC", sans-serif; color: #8c8c8c; text-shadow: 1px 1px 0 #fff; }

/* floating menus */
.ctx {
  position: absolute;
  display: flex;
  flex-direction: column;
  padding: 1px 0 2px;
  border: 1px solid #aaa;
  box-shadow: 2px 3px 4px rgba(0, 0, 0, .4);
  background: linear-gradient(#f0f0f0, #f0f0f0) 32px 4px / 2px calc(100% - 8px) no-repeat #fff;
}
.ctx-main { left: 761px; top: 371px; width: 326px; }
.ctx-sub { left: 1086px; top: 714px; width: 157px; }
.ctx button { display: flex; align-items: center; white-space: pre; position: relative; height: 28px; padding-left: 44px; }
.ctx kbd { position: absolute; left: 246px; font: inherit; color: #a3a393; }
.ctx button:disabled { color: #bcbcbc; }
.ctx button:disabled kbd { color: #ccc; }
.ctx .hot { background: #cbddfd; }
.ctx svg { position: absolute; width: 14px; height: 14px; }
.ctx .lead { left: 12px; }
.ctx .arr { right: 8px; width: 12px; height: 12px; color: #777; }
.ctx button:disabled .arr { color: #c4c4c4; }
.ctx .hot svg { color: #fff; }
.ctx hr { width: 291px; height: 1px; margin: 1px 0 2px 33px; border: 0; background: #dcdcdc; }
```
